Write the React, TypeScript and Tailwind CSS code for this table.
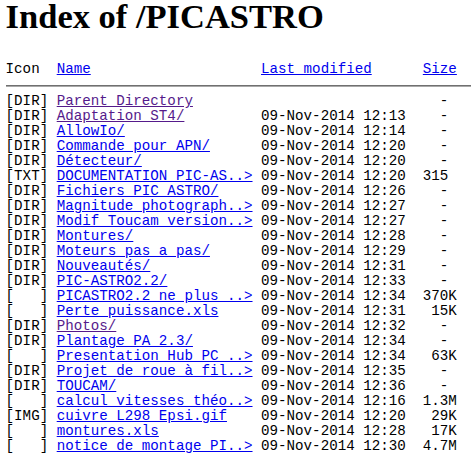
type Entry = {
  icon: string;
  name: string;
  date: string;
  size: string;
  visited?: boolean;
};

const entries: Entry[] = [
  { icon: '[DIR]', name: 'Parent Directory', date: '', size: '  - ', visited: true },
  { icon: '[DIR]', name: 'Adaptation ST4/', date: '09-Nov-2014 12:13', size: '  - ', visited: true },
  { icon: '[DIR]', name: 'AllowIo/', date: '09-Nov-2014 12:14', size: '  - ' },
  { icon: '[DIR]', name: 'Commande pour APN/', date: '09-Nov-2014 12:20', size: '  - ' },
  { icon: '[DIR]', name: 'Détecteur/', date: '09-Nov-2014 12:20', size: '  - ' },
  { icon: '[TXT]', name: 'DOCUMENTATION PIC-AS..>', date: '09-Nov-2014 12:20', size: '315 ' },
  { icon: '[DIR]', name: 'Fichiers PIC_ASTRO/', date: '09-Nov-2014 12:26', size: '  - ' },
  { icon: '[DIR]', name: 'Magnitude photograph..>', date: '09-Nov-2014 12:27', size: '  - ' },
  { icon: '[DIR]', name: 'Modif Toucam version..>', date: '09-Nov-2014 12:27', size: '  - ' },
  { icon: '[DIR]', name: 'Montures/', date: '09-Nov-2014 12:28', size: '  - ' },
  { icon: '[DIR]', name: 'Moteurs pas a pas/', date: '09-Nov-2014 12:29', size: '  - ' },
  { icon: '[DIR]', name: 'Nouveautés/', date: '09-Nov-2014 12:31', size: '  - ' },
  { icon: '[DIR]', name: 'PIC-ASTRO2.2/', date: '09-Nov-2014 12:33', size: '  - ' },
  { icon: '[   ]', name: 'PICASTRO2.2 ne plus ..>', date: '09-Nov-2014 12:34', size: '370K' },
  { icon: '[   ]', name: 'Perte puissance.xls', date: '09-Nov-2014 12:31', size: ' 15K' },
  { icon: '[DIR]', name: 'Photos/', date: '09-Nov-2014 12:32', size: '  - ', visited: true },
  { icon: '[DIR]', name: 'Plantage PA 2.3/', date: '09-Nov-2014 12:34', size: '  - ' },
  { icon: '[   ]', name: 'Presentation Hub PC ..>', date: '09-Nov-2014 12:34', size: ' 63K' },
  { icon: '[DIR]', name: 'Projet de roue à fil..>', date: '09-Nov-2014 12:35', size: '  - ' },
  { icon: '[DIR]', name: 'TOUCAM/', date: '09-Nov-2014 12:36', size: '  - ' },
  { icon: '[   ]', name: 'calcul vitesses théo..>', date: '09-Nov-2014 12:16', size: '1.3M' },
  { icon: '[IMG]', name: 'cuivre L298 Epsi.gif', date: '09-Nov-2014 12:20', size: ' 29K' },
  { icon: '[   ]', name: 'montures.xls', date: '09-Nov-2014 12:28', size: ' 17K' },
  { icon: '[   ]', name: 'notice de montage PI..>', date: '09-Nov-2014 12:30', size: '4.7M' }
];

const pad = (n: number) => ' '.repeat(Math.max(n, 0));

const App = () => {
  return (
    <div className="min-h-screen overflow-hidden bg-white pl-[5.6px] text-black">
      <h1 className="pt-[0.4px] font-['Liberation_Serif',serif] text-[34.5px] font-bold leading-[32px]">
        Index of /PICASTRO
      </h1>

      <pre className="mt-[30px] whitespace-pre font-['Liberation_Mono',monospace] text-[14.2px] leading-[15px]">
        <div>
          {'Icon  '}
          <a href="#" className="text-[#0000ee] underline">Name</a>
          {pad(24 - 4)}
          <a href="#" className="text-[#0000ee] underline">Last modified</a>
          {pad(19 - 13)}
          <a href="#" className="text-[#0000ee] underline">Size</a>
        </div>
        <hr className="mt-[8px] mb-[7px] h-0 border-t border-b border-t-[#707070] border-b-[#a8a8a8]" />
        {entries.map(entry => (
          <div key={entry.name}>
            {entry.icon + ' '}
            <a href="#" className={entry.visited ? 'text-[#551a8b] underline' : 'text-[#0000ee] underline'}>
              {entry.name}
            </a>
            {pad(24 - entry.name.length)}
            {(entry.date || pad(17)) + '  ' + entry.size}
          </div>
        ))}
      </pre>
    </div>
  );
};

export default App;
